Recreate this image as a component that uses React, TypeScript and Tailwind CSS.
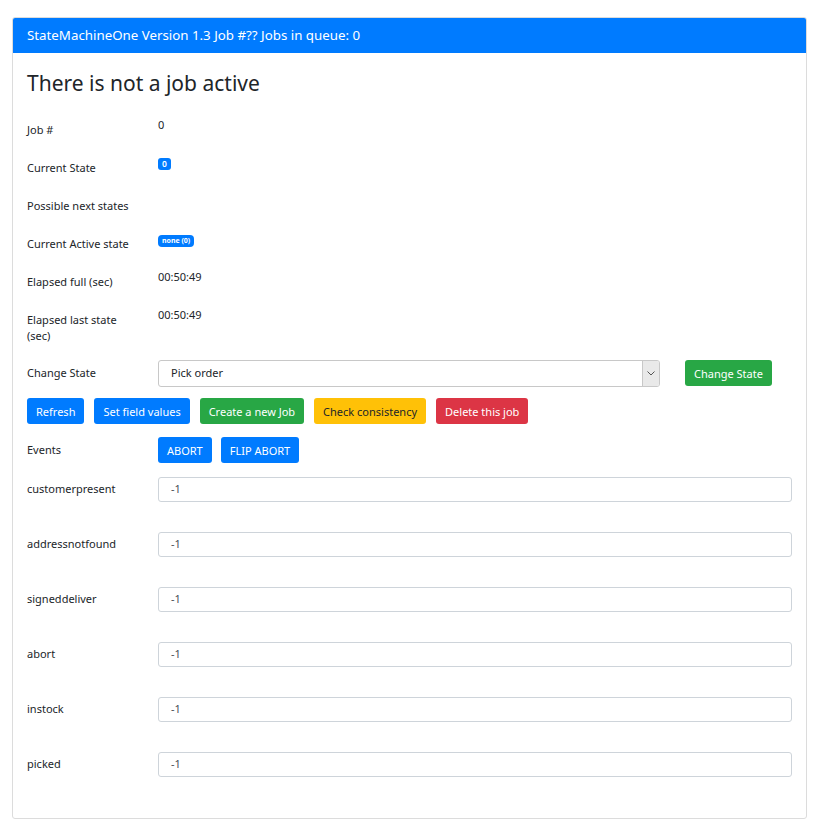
import React from "react";

const font = { fontFamily: '"Noto Sans", "Liberation Sans", sans-serif' };

function Btn({ color, children }: { color: string; children: React.ReactNode }) {
  return (
    <button
      className={`h-[26px] px-[9px] rounded-[3px] text-[11px] leading-none whitespace-nowrap ${color}`}
    >
      {children}
    </button>
  );
}

function InfoRow({ label, children }: { label: string; children?: React.ReactNode }) {
  return (
    <div className="flex h-[38px]">
      <div className="w-[131px] pr-[23px] pt-[5px] text-[11px] leading-[16px] text-[#212529]">{label}</div>
      <div className="pt-[1px] text-[11px] leading-[14px] text-[#212529]">{children}</div>
    </div>
  );
}

export default function App() {
  const fields = ["customerpresent", "addressnotfound", "signeddeliver", "abort", "instock", "picked"];
  return (
    <div className="bg-white min-h-[819px] pl-[12px] pr-[12px] pt-[17px]" style={font}>
      <div className="w-[795px] border border-[#dcdcdc] rounded-[3px] overflow-hidden">
        <div className="h-[35px] bg-[#007bff] text-white text-[13.3px] flex items-center px-[14px]">
          StateMachineOne Version 1.3 Job #?? Jobs in queue: 0
        </div>
        <div className="px-[14px] pt-[15px] pb-[41px]">
          <h3 className="text-[21px] leading-[30px] text-[#212529] mb-[19px]">There is not a job active</h3>
          <InfoRow label="Job #">0</InfoRow>
          <InfoRow label="Current State">
            <span className="inline-flex items-center justify-center h-[12px] px-[4px] rounded-[3px] bg-[#007bff] text-white text-[8.5px] font-semibold mt-[2px]">0</span>
          </InfoRow>
          <InfoRow label="Possible next states" />
          <InfoRow label="Current Active state">
            <span className="inline-flex items-center justify-center h-[12px] px-[4px] rounded-[4px] bg-[#007bff] text-white text-[7px] font-bold mt-[2px]">none (0)</span>
          </InfoRow>
          <InfoRow label="Elapsed full (sec)">00:50:49</InfoRow>
          <div className="flex h-[52px]">
            <div className="w-[131px] pr-[23px] pt-[5px] text-[11px] leading-[16px] text-[#212529]">Elapsed last state (sec)</div>
            <div className="pt-[1px] text-[11px] leading-[14px] text-[#212529]">00:50:49</div>
          </div>
          <div className="flex items-center h-[28px]">
            <div className="w-[131px] text-[11px] text-[#212529]">Change State</div>
            <div className="w-[502px] h-[27px] border border-[#c8c8c8] rounded-[3px] flex items-stretch">
              <div className="flex-1 flex items-center pl-[12px] text-[11px] text-[#212529]">Pick order</div>
              <div className="w-[17px] bg-[#e9e9e9] border-l border-[#c8c8c8] flex items-center justify-center rounded-r-[2px]">
                <svg width="8" height="5" viewBox="0 0 8 5">
                  <path d="M0.5 0.5 L4 4 L7.5 0.5" fill="none" stroke="#555" strokeWidth="1" />
                </svg>
              </div>
            </div>
            <div className="ml-[25px]">
              <Btn color="bg-[#28a745] text-white">Change State</Btn>
            </div>
          </div>
          <div className="flex gap-[10px] mt-[11px]">
            <Btn color="bg-[#007bff] text-white">Refresh</Btn>
            <Btn color="bg-[#007bff] text-white">Set field values</Btn>
            <Btn color="bg-[#28a745] text-white">Create a new Job</Btn>
            <Btn color="bg-[#ffc107] text-[#212529]">Check consistency</Btn>
            <Btn color="bg-[#dc3545] text-white">Delete this job</Btn>
          </div>
          <div className="flex items-center mt-[13px]">
            <div className="w-[131px] text-[11px] text-[#212529]">Events</div>
            <div className="flex gap-[9px]">
              <Btn color="bg-[#007bff] text-white">ABORT</Btn>
              <Btn color="bg-[#007bff] text-white">FLIP ABORT</Btn>
            </div>
          </div>
          <div className="mt-[14px] flex flex-col gap-[30px]">
            {fields.map((f) => (
              <div key={f} className="flex items-center">
                <div className="w-[131px] text-[11px] text-[#212529]">{f}</div>
                <div className="flex-1 h-[25px] border border-[#ced4da] rounded-[3px] flex items-center pl-[12px] text-[11px] text-[#495057]">-1</div>
              </div>
            ))}
          </div>
        </div>
      </div>
    </div>
  );
}
